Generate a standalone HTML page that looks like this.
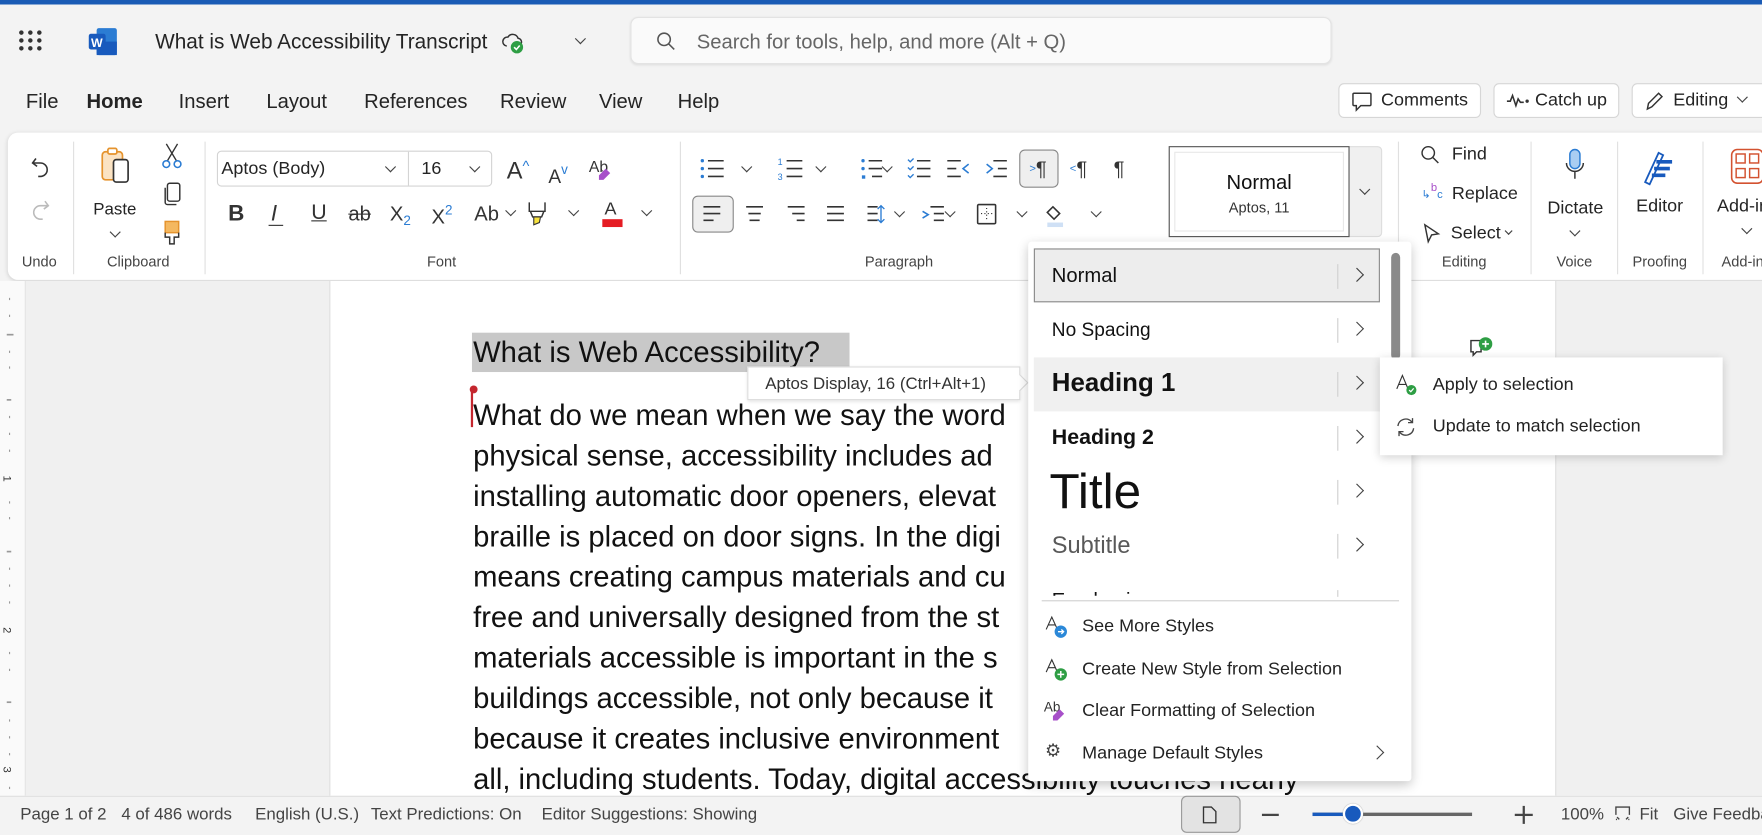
<!DOCTYPE html>
<html><head><meta charset="utf-8"><style>
html,body{margin:0;padding:0;width:1762px;height:834px;overflow:hidden;background:#f3f3f3}
#s{position:absolute;left:0;top:0;width:1568px;height:742px;transform:scale(1.12372,1.12399);transform-origin:0 0;font-family:"Liberation Sans",sans-serif;color:#242424}
.a{position:absolute;white-space:nowrap;line-height:1}
.ch{position:absolute;width:6px;height:6px;border-right:1.3px solid #444;border-bottom:1.3px solid #444;transform:rotate(45deg)}
.cr{position:absolute;width:8px;height:8px;border-right:1.5px solid #444;border-bottom:1.5px solid #444;transform:rotate(-45deg)}
.btn{position:absolute;background:#fff;border:1px solid #d6d6d6;border-radius:5px;box-sizing:border-box}
.sep{position:absolute;width:1px;background:#e0e0e0}
.lbl{position:absolute;font-size:13px;color:#444;line-height:1;white-space:nowrap;transform:translateX(-50%)}
.doc{font-size:26px;color:#111}
.vs{position:absolute;width:1px;height:22px;background:#d0d0d0;left:1190px}
</style></head><body><div id="s">
<div class="a" style="left:0;top:0;width:1568px;height:4px;background:#1a5bb5"></div>
<svg class="a" style="left:16px;top:26px" width="22" height="20"><g fill="#333"><circle cx="3" cy="3" r="2"/><circle cx="11" cy="3" r="2"/><circle cx="19" cy="3" r="2"/><circle cx="3" cy="10" r="2"/><circle cx="11" cy="10" r="2"/><circle cx="19" cy="10" r="2"/><circle cx="3" cy="17" r="2"/><circle cx="11" cy="17" r="2"/><circle cx="19" cy="17" r="2"/></g></svg>
<svg class="a" style="left:78px;top:24px" width="28" height="26"><rect x="8" y="1" width="18" height="24" rx="2" fill="#2b7cd3"/><rect x="8" y="13" width="18" height="12" fill="#185abd"/><rect x="1" y="6" width="15" height="14" rx="2" fill="#185abd"/><text x="3" y="18" font-size="11" fill="#fff" font-family="Liberation Sans" font-weight="bold">W</text></svg>
<div class="a" style="left:138px;top:28px;font-size:18.5px;color:#242424">What is Web Accessibility Transcript</div>
<svg class="a" style="left:446px;top:27px" width="22" height="22"><path d="M5 14a4 4 0 0 1 1-8 5 5 0 0 1 9 1 3.5 3.5 0 0 1 2 6" fill="none" stroke="#333" stroke-width="1.3"/><circle cx="14" cy="15" r="5.5" fill="#2e9e44"/><path d="M11.5 15l2 2 3-3.5" stroke="#fff" stroke-width="1.4" fill="none"/></svg>
<div class="ch" style="left:513px;top:31px"></div>
<div class="a" style="left:561px;top:15px;width:624px;height:42px;background:#fafafa;border:1px solid #e3e3e3;border-radius:7px;box-sizing:border-box;box-shadow:0 1px 2px rgba(0,0,0,.08)"></div>
<svg class="a" style="left:584px;top:28px" width="18" height="18"><circle cx="7" cy="7" r="5.5" fill="none" stroke="#555" stroke-width="1.4"/><path d="M11 11l5 5" stroke="#555" stroke-width="1.4"/></svg>
<div class="a" style="left:620px;top:28px;font-size:18px;color:#666">Search for tools, help, and more (Alt + Q)</div>
<div class="a" style="left:23px;top:81px;font-size:18px">File</div>
<div class="a" style="left:77px;top:81px;font-size:18px;font-weight:bold">Home</div>
<div class="a" style="left:159px;top:81px;font-size:18px">Insert</div>
<div class="a" style="left:237px;top:81px;font-size:18px">Layout</div>
<div class="a" style="left:324px;top:81px;font-size:18px">References</div>
<div class="a" style="left:445px;top:81px;font-size:18px">Review</div>
<div class="a" style="left:533px;top:81px;font-size:18px">View</div>
<div class="a" style="left:603px;top:81px;font-size:18px">Help</div>
<div class="btn" style="left:1191px;top:74px;width:127px;height:31px"></div>
<svg class="a" style="left:1202px;top:81px" width="20" height="20"><path d="M3 2h14a1 1 0 0 1 1 1v9a1 1 0 0 1-1 1h-8l-4 4v-4h-2a1 1 0 0 1-1-1v-9a1 1 0 0 1 1-1z" fill="none" stroke="#333" stroke-width="1.3"/></svg>
<div class="a" style="left:1229px;top:82px;font-size:16px">Comments</div>
<div class="btn" style="left:1329px;top:74px;width:112px;height:31px"></div>
<svg class="a" style="left:1340px;top:82px" width="22" height="14"><path d="M1 8h3l2-5 3 9 2-6 2 3h3" fill="none" stroke="#333" stroke-width="1.4"/><circle cx="19" cy="8" r="1.5" fill="#333"/></svg>
<div class="a" style="left:1366px;top:82px;font-size:16px">Catch up</div>
<div class="btn" style="left:1452px;top:74px;width:125px;height:31px"></div>
<svg class="a" style="left:1463px;top:80px" width="18" height="20"><path d="M3 17l1-5 9-9 3 3-9 9z" fill="none" stroke="#333" stroke-width="1.3"/></svg>
<div class="a" style="left:1489px;top:82px;font-size:16px">Editing</div>
<div class="ch" style="left:1547px;top:83px"></div>
<div class="a" style="left:7px;top:118px;width:1580px;height:131px;background:#fff;border-radius:9px;box-shadow:0 1px 4px rgba(0,0,0,.15)"></div>
<div class="sep" style="left:65px;top:126px;height:118px"></div>
<div class="sep" style="left:182px;top:126px;height:118px"></div>
<div class="sep" style="left:605px;top:126px;height:118px"></div>
<div class="sep" style="left:1244px;top:126px;height:118px"></div>
<div class="sep" style="left:1362px;top:126px;height:118px"></div>
<div class="sep" style="left:1439px;top:126px;height:118px"></div>
<div class="sep" style="left:1515px;top:126px;height:118px"></div>
<div class="lbl" style="left:35px;top:226px">Undo</div>
<div class="lbl" style="left:123px;top:226px">Clipboard</div>
<div class="lbl" style="left:393px;top:226px">Font</div>
<div class="lbl" style="left:800px;top:226px">Paragraph</div>
<div class="lbl" style="left:1303px;top:226px">Editing</div>
<div class="lbl" style="left:1401px;top:226px">Voice</div>
<div class="lbl" style="left:1477px;top:226px">Proofing</div>
<div class="a" style="left:1532px;top:226px;font-size:13px;color:#444">Add-in</div>
<svg class="a" style="left:26px;top:138px" width="20" height="22"><path d="M6 3L3 7l4 3M3 7h7a6 6 0 0 1 0 12h-2" fill="none" stroke="#333" stroke-width="1.4"/></svg>
<svg class="a" style="left:26px;top:176px" width="20" height="22"><path d="M14 3l3 4-4 3M17 7h-7a6 6 0 0 0 0 12h2" fill="none" stroke="#bbb" stroke-width="1.4"/></svg>
<svg class="a" style="left:88px;top:130px" width="30" height="34"><rect x="3" y="5" width="18" height="25" rx="3" fill="#fbe3c3" stroke="#e5932d" stroke-width="1.5"/><rect x="8" y="2" width="8" height="5" rx="1.5" fill="#fff" stroke="#e5932d" stroke-width="1.5"/><rect x="13" y="12" width="13" height="20" rx="2.5" fill="#fff" stroke="#333" stroke-width="1.5"/></svg>
<div class="a" style="left:83px;top:179px;font-size:15px">Paste</div>
<div class="ch" style="left:99px;top:203px"></div>
<svg class="a" style="left:143px;top:127px" width="20" height="24"><path d="M5 1l9 15M15 1L6 16" stroke="#333" stroke-width="1.2"/><circle cx="5" cy="19" r="3" fill="none" stroke="#2b7cd3" stroke-width="1.4"/><circle cx="15" cy="19" r="3" fill="none" stroke="#2b7cd3" stroke-width="1.4"/></svg>
<svg class="a" style="left:144px;top:162px" width="18" height="24"><rect x="5" y="1" width="11" height="16" rx="2" fill="none" stroke="#333" stroke-width="1.3"/><path d="M3 5v13a2 2 0 0 0 2 2h8" fill="none" stroke="#333" stroke-width="1.3"/></svg>
<svg class="a" style="left:144px;top:196px" width="18" height="24"><rect x="3" y="1" width="12" height="10" fill="#f4b860" stroke="#e5932d" stroke-width="1.3"/><path d="M3 11v4h4v6h4v-6h4v-4" fill="none" stroke="#333" stroke-width="1.3"/></svg>
<div class="a" style="left:193px;top:134px;width:245px;height:32px;border:1px solid #d4d4d4;border-radius:4px;box-sizing:border-box"></div>
<div class="a" style="left:363px;top:135px;width:1px;height:30px;background:#d4d4d4"></div>
<div class="a" style="left:197px;top:143px;font-size:16px">Aptos (Body)</div>
<div class="ch" style="left:344px;top:145px"></div>
<div class="a" style="left:375px;top:143px;font-size:16px">16</div>
<div class="ch" style="left:419px;top:145px"></div>
<div class="a" style="left:451px;top:141px;font-size:21px;color:#333">A<span style="font-size:13px;color:#2b7cd3;vertical-align:7px">^</span></div>
<div class="a" style="left:488px;top:145px;font-size:17px;color:#333">A<span style="font-size:12px;color:#2b7cd3;vertical-align:8px">v</span></div>
<div class="a" style="left:524px;top:141px;font-size:14px;color:#333">Ab</div>
<svg class="a" style="left:530px;top:146px" width="16" height="16"><path d="M3 10l6-6 4 4-6 6H3z" fill="#a74fc9"/></svg>
<div class="a" style="left:203px;top:180px;font-size:20px;font-weight:bold;color:#333">B</div>
<div class="a" style="left:241px;top:180px;font-size:20px;font-style:italic;color:#333">I</div>
<div class="a" style="left:239px;top:200px;width:13px;height:1px;background:#333"></div>
<div class="a" style="left:277px;top:180px;font-size:19px;color:#333;text-decoration:underline">U</div>
<div class="a" style="left:310px;top:181px;font-size:18px;color:#333;text-decoration:line-through">ab</div>
<div class="a" style="left:347px;top:181px;font-size:18px;color:#333">X<span style="font-size:12px;color:#2b7cd3;vertical-align:-4px">2</span></div>
<div class="a" style="left:384px;top:181px;font-size:18px;color:#333">X<span style="font-size:12px;color:#2b7cd3;vertical-align:8px">2</span></div>
<div class="a" style="left:422px;top:181px;font-size:18px;color:#333">Ab</div>
<div class="ch" style="left:451px;top:184px"></div>
<svg class="a" style="left:468px;top:178px" width="20" height="24"><path d="M3 2v8h14V2M4 10l2 5h8l2-5" fill="none" stroke="#333" stroke-width="1.3"/><path d="M7 15h6l-1 5-5 2z" fill="#f7e23e" stroke="#333" stroke-width="1"/></svg>
<div class="ch" style="left:507px;top:184px"></div>
<div class="a" style="left:538px;top:179px;font-size:16px;color:#333">A</div>
<div class="a" style="left:536px;top:195px;width:18px;height:7px;background:#e51c23"></div>
<div class="ch" style="left:572px;top:184px"></div>
<svg class="a" style="left:620px;top:138px" width="380" height="26" fill="none">
<g stroke="#333" stroke-width="1.4"><path d="M10 5h14M10 12h14M10 19h14"/></g><g fill="#2b7cd3"><circle cx="5" cy="5" r="1.5"/><circle cx="5" cy="12" r="1.5"/><circle cx="5" cy="19" r="1.5"/></g>
<g stroke="#333" stroke-width="1.4"><path d="M80 5h14M80 12h14M80 19h14"/></g><text x="72" y="22" font-size="8" fill="#2b7cd3" font-family="Liberation Sans">3</text><text x="72" y="9" font-size="8" fill="#2b7cd3" font-family="Liberation Sans">1</text>
<g stroke="#333" stroke-width="1.4"><path d="M153 5h12M153 12h12M156 19h9"/></g><g fill="#2b7cd3"><circle cx="148" cy="5" r="1.5"/><circle cx="148" cy="12" r="1.5"/><rect x="147" y="18" width="3" height="3"/></g>
<g stroke="#333" stroke-width="1.4"><path d="M196 5h12M196 12h12M196 19h12"/></g><g stroke="#2b7cd3" stroke-width="1.2"><path d="M188 4l2 2 3-3M188 11l2 2 3-3M188 18l2 2 3-3"/></g>
<g stroke="#333" stroke-width="1.4"><path d="M223 5h12M223 12h8M223 19h12"/></g><path d="M242 8l-5 4 5 4" stroke="#2b7cd3" stroke-width="1.4"/>
<g stroke="#333" stroke-width="1.4"><path d="M264 5h12M268 12h8M264 19h12"/></g><path d="M258 8l5 4-5 4" stroke="#2b7cd3" stroke-width="1.4"/>
</svg>
<div class="ch" style="left:661px;top:145px"></div>
<div class="ch" style="left:727px;top:145px"></div>
<div class="ch" style="left:786px;top:145px"></div>
<div class="a" style="left:907px;top:133px;width:35px;height:34px;background:#efefef;border:1px solid #888;border-radius:5px;box-sizing:border-box"></div>
<div class="a" style="left:916px;top:141px;font-size:18px;color:#333"><span style="font-size:10px;color:#2b7cd3;vertical-align:3px">&gt;</span>¶</div>
<div class="a" style="left:952px;top:141px;font-size:18px;color:#333"><span style="font-size:10px;color:#2b7cd3;vertical-align:3px">&lt;</span>¶</div>
<div class="a" style="left:991px;top:141px;font-size:18px;color:#333">¶</div>
<div class="a" style="left:616px;top:174px;width:37px;height:33px;background:#efefef;border:1px solid #888;border-radius:5px;box-sizing:border-box"></div>
<svg class="a" style="left:624px;top:180px" width="380" height="24" fill="none" stroke="#333" stroke-width="1.4">
<path d="M2 4h15M2 10h15M2 16h9"/><path d="M40 4h15M42 10h11M43 16h9"/><path d="M77 4h15M81 10h11M85 16h7"/><path d="M112 4h15M112 10h15M112 16h15"/>
<path d="M148 4h9M148 10h9M148 16h9"/><path d="M160 3v15M157 6l3-3 3 3M157 15l3 3 3-3" stroke="#2b7cd3" stroke-width="1.2"/>
<path d="M204 4h12M207 10h9M207 16h9"/><path d="M197 8l5 3-5 3" stroke="#2b7cd3"/>
<rect x="246" y="2" width="16" height="17" rx="1"/><path d="M254 5v11M249 10h11" stroke-dasharray="1 2" stroke-width="1"/>
<path d="M313 4l6 6-5 5-6-6z"/><rect x="308" y="18" width="14" height="4" fill="#cfe0f5" stroke="none"/>
</svg>
<div class="ch" style="left:797px;top:185px"></div>
<div class="ch" style="left:842px;top:185px"></div>
<div class="ch" style="left:906px;top:185px"></div>
<div class="ch" style="left:972px;top:185px"></div>
<div class="a" style="left:1040px;top:130px;width:190px;height:81px;background:#f0f0f0;border:1px solid #ddd;border-radius:4px;box-sizing:border-box"></div>
<div class="a" style="left:1040px;top:130px;width:161px;height:81px;background:#fff;border:1.5px solid #555;box-sizing:border-box"></div>
<div class="a" style="left:1045px;top:135px;width:151px;height:71px;border:1px solid #e8e8e8;box-sizing:border-box"></div>
<div class="a" style="left:1040px;top:153px;width:161px;text-align:center;font-size:18px;color:#111">Normal</div>
<div class="a" style="left:1040px;top:178px;width:161px;text-align:center;font-size:13px;color:#333">Aptos, 11</div>
<div class="ch" style="left:1211px;top:165px"></div>
<svg class="a" style="left:1264px;top:129px" width="18" height="18"><circle cx="7" cy="7" r="5.5" fill="none" stroke="#333" stroke-width="1.3"/><path d="M11 11l5 5" stroke="#333" stroke-width="1.3"/></svg>
<div class="a" style="left:1292px;top:130px;font-size:16px">Find</div>
<div class="a" style="left:1265px;top:163px;font-size:10px;color:#2b7cd3">↳<span style="color:#a74fc9;vertical-align:6px">b</span>c</div>
<div class="a" style="left:1292px;top:165px;font-size:16px">Replace</div>
<svg class="a" style="left:1265px;top:198px" width="18" height="20"><path d="M3 2l12 8-6 1-3 6z" fill="none" stroke="#333" stroke-width="1.3"/></svg>
<div class="a" style="left:1291px;top:200px;font-size:16px">Select</div>
<div class="ch" style="left:1340px;top:203px;width:4px;height:4px"></div>
<svg class="a" style="left:1391px;top:132px" width="22" height="32"><rect x="6" y="1" width="9" height="17" rx="4.5" fill="#a9cdf2" stroke="#2b7cd3" stroke-width="1.3"/><path d="M3 13a7.5 7.5 0 0 0 15 0M10.5 21v6" fill="none" stroke="#333" stroke-width="1.3"/></svg>
<div class="a" style="left:1377px;top:178px;font-size:16px">Dictate</div>
<div class="ch" style="left:1398px;top:202px"></div>
<svg class="a" style="left:1460px;top:130px" width="32" height="36"><path d="M4 32l12-26 4 2-12 26z" fill="none" stroke="#185abd" stroke-width="1.6"/><path d="M14 14h14M12 20h14M10 26h12" stroke="#185abd" stroke-width="3.2"/></svg>
<div class="a" style="left:1456px;top:176px;font-size:16px">Editor</div>
<svg class="a" style="left:1540px;top:132px" width="30" height="32"><rect x="1" y="1" width="28" height="30" rx="5" fill="none" stroke="#d35230" stroke-width="1.4"/><rect x="5" y="5" width="8" height="8" fill="none" stroke="#d35230" stroke-width="1.3"/><rect x="17" y="5" width="8" height="8" fill="none" stroke="#d35230" stroke-width="1.3"/><rect x="5" y="18" width="8" height="8" fill="none" stroke="#d35230" stroke-width="1.3"/><rect x="17" y="18" width="8" height="8" fill="none" stroke="#d35230" stroke-width="1.3"/></svg>
<div class="a" style="left:1528px;top:176px;font-size:16px">Add-in</div>
<div class="ch" style="left:1551px;top:200px"></div>
<div class="a" style="left:0;top:250px;width:1568px;height:458px;background:#f0f0f0"></div>
<div class="a" style="left:0;top:250px;width:22px;height:458px;background:#fafafa;border-right:1px solid #e3e3e3"></div>
<svg class="a" style="left:0;top:250px" width="22" height="458"><g fill="#999"><rect x="8" y="15" width="1" height="2"/><rect x="8" y="30" width="1" height="2"/><rect x="6" y="47" width="6" height="1.5"/><rect x="8" y="62" width="1" height="2"/><rect x="8" y="76" width="1" height="2"/><rect x="6" y="105" width="4" height="1.5"/><rect x="8" y="120" width="1" height="2"/><rect x="8" y="135" width="1" height="2"/><rect x="8" y="150" width="1" height="2"/><rect x="8" y="196" width="1" height="2"/><rect x="8" y="210" width="1" height="2"/><rect x="6" y="240" width="4" height="1.5"/><rect x="8" y="255" width="1" height="2"/><rect x="8" y="270" width="1" height="2"/><rect x="8" y="285" width="1" height="2"/><rect x="8" y="330" width="1" height="2"/><rect x="8" y="345" width="1" height="2"/><rect x="6" y="374" width="4" height="1.5"/><rect x="8" y="390" width="1" height="2"/><rect x="8" y="405" width="1" height="2"/><rect x="8" y="420" width="1" height="2"/><rect x="8" y="450" width="1" height="2"/></g>
<text x="5" y="181" font-size="10" fill="#333" transform="rotate(90 8 176)" font-family="Liberation Sans">1</text><text x="5" y="316" font-size="10" fill="#333" transform="rotate(90 8 311)" font-family="Liberation Sans">2</text><text x="5" y="440" font-size="10" fill="#333" transform="rotate(90 8 435)" font-family="Liberation Sans">3</text></svg>
<div class="a" style="left:293px;top:250px;width:1090px;height:458px;background:#fff;border-left:1px solid #ddd;border-right:1px solid #ddd"></div>
<div class="a" style="left:420px;top:296px;width:336px;height:35px;background:#c8c8c8"></div>
<div class="a doc" style="left:421px;top:300px">What is Web Accessibility?</div>
<div class="a" style="left:419px;top:348px;width:2px;height:32px;background:#c4262e"></div>
<div class="a" style="left:418px;top:343px;width:7px;height:7px;border-radius:50%;background:#c4262e"></div>
<div class="a doc" style="left:421px;top:351px;line-height:36px;white-space:pre">What do we mean when we say the word
physical sense, accessibility includes ad
installing automatic door openers, elevat
braille is placed on door signs. In the digi
means creating campus materials and cu
free and universally designed from the st
materials accessible is important in the s
buildings accessible, not only because it
because it creates inclusive environment
all, including students. Today, digital accessibility touches nearly</div>
<div class="a" style="left:665px;top:326px;width:243px;height:30px;background:#fff;border:1px solid #ddd;box-sizing:border-box;box-shadow:0 1px 3px rgba(0,0,0,.12)"></div>
<div class="a" style="left:902px;top:335px;width:10px;height:10px;background:#fff;border-top:1px solid #ddd;border-right:1px solid #ddd;transform:rotate(45deg)"></div>
<div class="a" style="left:681px;top:334px;font-size:15px;color:#333">Aptos Display, 16 (Ctrl+Alt+1)</div>
<svg class="a" style="left:1306px;top:298px" width="24" height="24"><path d="M3 5h9v10H8l-3 3v-3H3z" fill="none" stroke="#333" stroke-width="1.3"/><circle cx="16" cy="8" r="6" fill="#2e9e44"/><path d="M16 5v6M13 8h6" stroke="#fff" stroke-width="1.4"/></svg>
<div class="a" style="left:915px;top:215px;width:341px;height:480px;background:#fff;box-shadow:0 3px 10px rgba(0,0,0,.22);border-radius:3px;overflow:hidden">
<div class="a" style="left:5px;top:6px;width:308px;height:48px;background:#ededed;border:1px solid #8a8a8a;box-sizing:border-box"></div>
<div class="a" style="left:5px;top:103px;width:308px;height:48px;background:#f0f0f0"></div>
<div class="a" style="left:21px;top:21px;font-size:18px;color:#111">Normal</div>
<div class="a" style="left:21px;top:70px;font-size:17px;color:#111">No Spacing</div>
<div class="a" style="left:21px;top:114px;font-size:23px;font-weight:bold;color:#111">Heading 1</div>
<div class="a" style="left:21px;top:165px;font-size:19px;font-weight:bold;color:#111">Heading 2</div>
<div class="a" style="left:19px;top:201px;font-size:44px;color:#111">Title</div>
<div class="a" style="left:21px;top:260px;font-size:21px;color:#595959">Subtitle</div>
<div class="a" style="left:21px;top:310px;font-size:18px;color:#111;height:5px;overflow:hidden">Emphasis</div>
<div class="vs" style="left:275px;top:20px"></div><div class="vs" style="left:275px;top:68px"></div><div class="vs" style="left:275px;top:116px"></div><div class="vs" style="left:275px;top:164px"></div><div class="vs" style="left:275px;top:212px"></div><div class="vs" style="left:275px;top:260px"></div><div class="vs" style="left:275px;top:310px;height:6px"></div>
<div class="cr" style="left:288px;top:25px"></div><div class="cr" style="left:288px;top:73px"></div><div class="cr" style="left:288px;top:121px"></div><div class="cr" style="left:288px;top:169px"></div><div class="cr" style="left:288px;top:217px"></div><div class="cr" style="left:288px;top:265px"></div>
<div class="a" style="left:323px;top:10px;width:8px;height:95px;background:#8a8a8a;border-radius:4px"></div>
<div class="a" style="left:12px;top:319px;width:318px;height:1px;background:#d0d0d0"></div>
<svg class="a" style="left:14px;top:332px" width="22" height="22"><path d="M2 13l5-11 5 11M4 9h6" fill="none" stroke="#333" stroke-width="1"/><circle cx="15" cy="15" r="5.5" fill="#2b88d8"/><path d="M12.5 15h5M15.5 13l2 2-2 2" stroke="#fff" stroke-width="1.2" fill="none"/></svg>
<div class="a" style="left:48px;top:335px;font-size:16px;color:#222">See More Styles</div>
<svg class="a" style="left:14px;top:370px" width="22" height="22"><path d="M2 13l5-11 5 11M4 9h6" fill="none" stroke="#333" stroke-width="1"/><circle cx="15" cy="15" r="5.5" fill="#2e9e44"/><path d="M15 12v6M12 15h6" stroke="#fff" stroke-width="1.3"/></svg>
<div class="a" style="left:48px;top:373px;font-size:16px;color:#222">Create New Style from Selection</div>
<div class="a" style="left:14px;top:408px;font-size:12px;color:#333">Ab</div>
<svg class="a" style="left:18px;top:410px" width="18" height="18"><path d="M4 12l6-6 4 4-6 6H4z" fill="#a74fc9"/></svg>
<div class="a" style="left:48px;top:410px;font-size:16px;color:#222">Clear Formatting of Selection</div>
<div class="a" style="left:15px;top:446px;font-size:16px;color:#444">⚙</div>
<div class="a" style="left:48px;top:448px;font-size:16px;color:#222">Manage Default Styles</div>
<div class="cr" style="left:306px;top:450px"></div>
</div>
<div class="a" style="left:1228px;top:318px;width:305px;height:87px;background:#fff;box-shadow:0 2px 8px rgba(0,0,0,.18)"></div>
<svg class="a" style="left:1241px;top:332px" width="22" height="22"><path d="M2 14l5-12 5 12M4 10h6" fill="none" stroke="#333" stroke-width="1"/><circle cx="15" cy="15" r="4.5" fill="#2e9e44"/><path d="M13 15l1.5 1.5 2.5-3" stroke="#fff" stroke-width="1.1" fill="none"/></svg>
<div class="a" style="left:1275px;top:335px;font-size:16px;color:#222">Apply to selection</div>
<svg class="a" style="left:1241px;top:370px" width="20" height="20"><path d="M3 9a7 7 0 0 1 12-4l1 1M17 11a7 7 0 0 1-12 4l-1-1" fill="none" stroke="#444" stroke-width="1.2"/><path d="M16 2v4h-4M4 18v-4h4" fill="none" stroke="#444" stroke-width="1.2"/></svg>
<div class="a" style="left:1275px;top:372px;font-size:16px;color:#222">Update to match selection</div>
<div class="a" style="left:0;top:708px;width:1568px;height:34px;background:#f3f3f3;border-top:1px solid #e0e0e0"></div>
<div class="a" style="left:18px;top:717px;font-size:15px;color:#444">Page 1 of 2</div>
<div class="a" style="left:108px;top:717px;font-size:15px;color:#444">4 of 486 words</div>
<div class="a" style="left:227px;top:717px;font-size:15px;color:#444">English (U.S.)</div>
<div class="a" style="left:330px;top:717px;font-size:15px;color:#444">Text Predictions: On</div>
<div class="a" style="left:482px;top:717px;font-size:15px;color:#444">Editor Suggestions: Showing</div>
<div class="a" style="left:1051px;top:708px;width:53px;height:33px;background:#e3e3e3;border:1px solid #999;border-radius:5px;box-sizing:border-box"></div>
<svg class="a" style="left:1069px;top:716px" width="16" height="18"><path d="M2 2h7l4 4v10H2z" fill="none" stroke="#333" stroke-width="1.2"/></svg>
<div class="a" style="left:1123px;top:724px;width:15px;height:1.5px;background:#444"></div>
<div class="a" style="left:1168px;top:723px;width:142px;height:3px;background:#666"></div>
<div class="a" style="left:1168px;top:723px;width:36px;height:3px;background:#185abd"></div>
<div class="a" style="left:1195px;top:715px;width:18px;height:18px;border-radius:50%;background:#185abd;border:2px solid #fff;box-sizing:border-box;box-shadow:0 0 1px #888"></div>
<div class="a" style="left:1348px;top:724px;width:16px;height:1.5px;background:#444"></div>
<div class="a" style="left:1355px;top:717px;width:1.5px;height:16px;background:#444"></div>
<div class="a" style="left:1389px;top:717px;font-size:15px;color:#444">100%</div>
<svg class="a" style="left:1436px;top:716px" width="16" height="16"><path d="M2 9V2h12v7M2 13h1M13 13h1M5 13l-2-2M11 13l2-2" fill="none" stroke="#444" stroke-width="1.2"/></svg>
<div class="a" style="left:1459px;top:717px;font-size:15px;color:#444">Fit</div>
<div class="a" style="left:1489px;top:717px;font-size:15px;color:#444">Give Feedback</div>
</div></body></html>
